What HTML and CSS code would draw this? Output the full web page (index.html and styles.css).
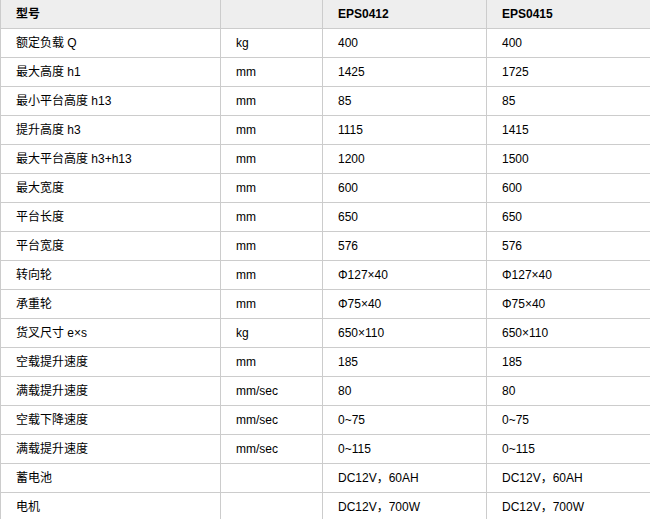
FILE: index.html
```html
<!DOCTYPE html>
<html lang="zh">
<head>
<meta charset="utf-8">
<title>参数表</title>
<link rel="stylesheet" href="styles.css">
</head>
<body>
<table class="spec">
  <colgroup>
    <col class="c-name">
    <col class="c-unit">
    <col class="c-a">
    <col class="c-b">
  </colgroup>
  <thead>
    <tr><th>型号</th><th></th><th>EPS0412</th><th>EPS0415</th></tr>
  </thead>
  <tbody>
    <tr><td>额定负载 Q</td><td>kg</td><td>400</td><td>400</td></tr>
    <tr><td>最大高度 h1</td><td>mm</td><td>1425</td><td>1725</td></tr>
    <tr><td>最小平台高度 h13</td><td>mm</td><td>85</td><td>85</td></tr>
    <tr><td>提升高度 h3</td><td>mm</td><td>1115</td><td>1415</td></tr>
    <tr><td>最大平台高度 h3+h13</td><td>mm</td><td>1200</td><td>1500</td></tr>
    <tr><td>最大宽度</td><td>mm</td><td>600</td><td>600</td></tr>
    <tr><td>平台长度</td><td>mm</td><td>650</td><td>650</td></tr>
    <tr><td>平台宽度</td><td>mm</td><td>576</td><td>576</td></tr>
    <tr><td>转向轮</td><td>mm</td><td>Φ127×40</td><td>Φ127×40</td></tr>
    <tr><td>承重轮</td><td>mm</td><td>Φ75×40</td><td>Φ75×40</td></tr>
    <tr><td>货叉尺寸 e×s</td><td>kg</td><td>650×110</td><td>650×110</td></tr>
    <tr><td>空载提升速度</td><td>mm</td><td>185</td><td>185</td></tr>
    <tr><td>满载提升速度</td><td>mm/sec</td><td>80</td><td>80</td></tr>
    <tr><td>空载下降速度</td><td>mm/sec</td><td>0~75</td><td>0~75</td></tr>
    <tr><td>满载提升速度</td><td>mm/sec</td><td>0~115</td><td>0~115</td></tr>
    <tr><td>蓄电池</td><td></td><td>DC12V，60AH</td><td>DC12V，60AH</td></tr>
    <tr><td>电机</td><td></td><td>DC12V，700W</td><td>DC12V，700W</td></tr>
  </tbody>
</table>
</body>
</html>
```
FILE: styles.css
```css
html, body {
  margin: 0;
  padding: 0;
  background: #fff;
}
body {
  font-family: "Liberation Sans", Arial, "Noto Sans CJK SC", sans-serif;
  font-size: 12px;
  color: #000;
}
.spec {
  width: 650px;
  border-collapse: collapse;
  table-layout: fixed;
}
.c-name { width: 220px; }
.c-unit { width: 102px; }
.c-a { width: 164px; }
.c-b { width: 164px; }
.spec th,
.spec td {
  border: 1px solid #cccccc;
  padding: 0 0 0 15px;
  height: 28px;
  text-align: left;
  vertical-align: middle;
  font-size: 12px;
  line-height: 14px;
  white-space: nowrap;
}
.spec th {
  background: #eeeeee;
  font-weight: bold;
  border-top: none;
}
```
